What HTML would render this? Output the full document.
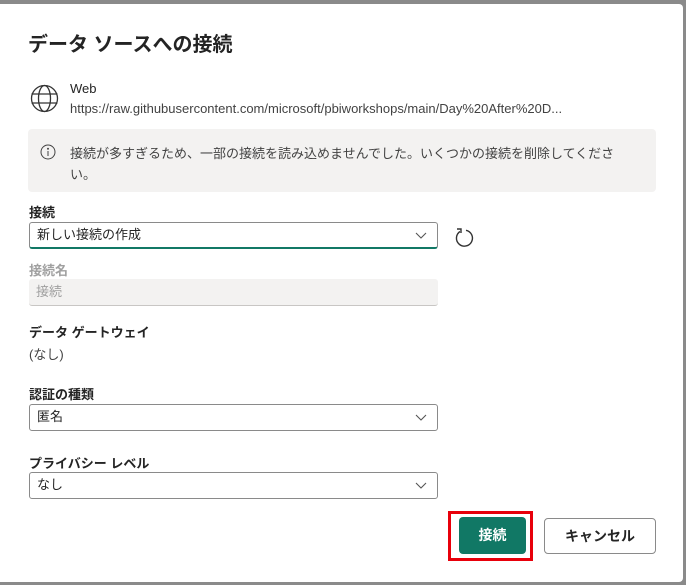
<!DOCTYPE html>
<html><head><meta charset="utf-8"><style>
*{margin:0;padding:0;box-sizing:border-box}
body{width:686px;height:585px;background:#8a8a8a;position:relative;overflow:hidden;font-family:"Liberation Sans","Noto Sans CJK JP",sans-serif;color:#242424}
#d{position:absolute;left:0;top:4px;width:683px;height:578px;background:#fff;border-radius:0 4px 4px 0}
.a{position:absolute;white-space:nowrap}
.t{font-size:13px}
.dd{position:absolute;left:29px;width:409px;height:27px;border:1px solid #8a8a8a;border-radius:3px;background:#fff;font-size:13px;line-height:16px;padding:4px 7px}
.dd svg{position:absolute;right:10px;top:9px}
</style></head><body>
<div id="d"></div>
<div class="a" style="left:28px;top:28px;font-size:20px;font-weight:bold;">データ ソースへの接続</div>
<svg class="a" style="left:30px;top:84px" width="29" height="29" viewBox="0 0 29 29" fill="none" stroke="#333" stroke-width="1.3"><circle cx="14.5" cy="14.5" r="13"/><ellipse cx="14.5" cy="14.5" rx="6" ry="13"/><line x1="1.5" y1="10" x2="27.5" y2="10"/><line x1="1.5" y1="19" x2="27.5" y2="19"/></svg>
<div class="a t" style="left:70px;top:81px">Web</div>
<div class="a t" style="left:70px;top:101px;color:#424242">https://raw.githubusercontent.com/microsoft/pbiworkshops/main/Day%20After%20D...</div>
<div class="a" style="left:28px;top:129px;width:628px;height:63px;background:#f3f2f1;border-radius:4px"></div>
<svg class="a" style="left:40px;top:144px" width="16" height="16" viewBox="0 0 16 16" fill="none" stroke="#424242" stroke-width="1"><circle cx="8" cy="8" r="7"/><line x1="8" y1="7" x2="8" y2="12"/><circle cx="8" cy="4.8" r=".5" fill="#424242"/></svg>
<div class="a t" style="left:70px;top:143px;color:#424242">接続が多すぎるため、一部の接続を読み込めませんでした。いくつかの接続を削除してくださ</div>
<div class="a t" style="left:70px;top:164px;color:#424242">い。</div>
<div class="a t" style="left:29px;top:202px;font-weight:bold">接続</div>
<div class="dd" style="top:222px;border-bottom:2px solid #117865">新しい接続の作成<svg width="12" height="8" viewBox="0 0 12 8" fill="none" stroke="#555" stroke-width="1.1"><path d="M1 1l5 5 5-5"/></svg></div>
<svg class="a" style="left:453px;top:226px" width="22" height="22" viewBox="0 0 22 22" fill="none" stroke="#333" stroke-width="1.4"><path d="M7 5.5A8 8 0 1 0 13 4.3"/><path d="M4 3h4v4"/></svg>
<div class="a t" style="left:29px;top:260px;color:#a0a0a0;font-weight:bold">接続名</div>
<div class="a" style="left:29px;top:279px;width:409px;height:27px;background:#f3f2f1;border-bottom:1px solid #c8c6c4;border-radius:3px;font-size:13px;line-height:16px;color:#a0a0a0;padding:5px 7px">接続</div>
<div class="a t" style="left:29px;top:322px;font-weight:bold">データ ゲートウェイ</div>
<div class="a t" style="left:29px;top:344px;color:#424242">(なし)</div>
<div class="a t" style="left:29px;top:384px;font-weight:bold">認証の種類</div>
<div class="dd" style="top:404px">匿名<svg width="12" height="8" viewBox="0 0 12 8" fill="none" stroke="#555" stroke-width="1.1"><path d="M1 1l5 5 5-5"/></svg></div>
<div class="a t" style="left:29px;top:453px;font-weight:bold">プライバシー レベル</div>
<div class="dd" style="top:472px">なし<svg width="12" height="8" viewBox="0 0 12 8" fill="none" stroke="#555" stroke-width="1.1"><path d="M1 1l5 5 5-5"/></svg></div>
<div class="a" style="left:448px;top:511px;width:85px;height:50px;border:3px solid #e8000b"></div>
<div class="a" style="left:459px;top:517px;width:67px;height:37px;background:#117865;border-radius:4px;color:#fff;font-size:14px;font-weight:bold;text-align:center;line-height:37px">接続</div>
<div class="a" style="left:544px;top:518px;width:112px;height:36px;border:1px solid #8a8a8a;border-radius:4px;background:#fff;font-size:14px;font-weight:bold;text-align:center;line-height:34px">キャンセル</div>
</body></html>
